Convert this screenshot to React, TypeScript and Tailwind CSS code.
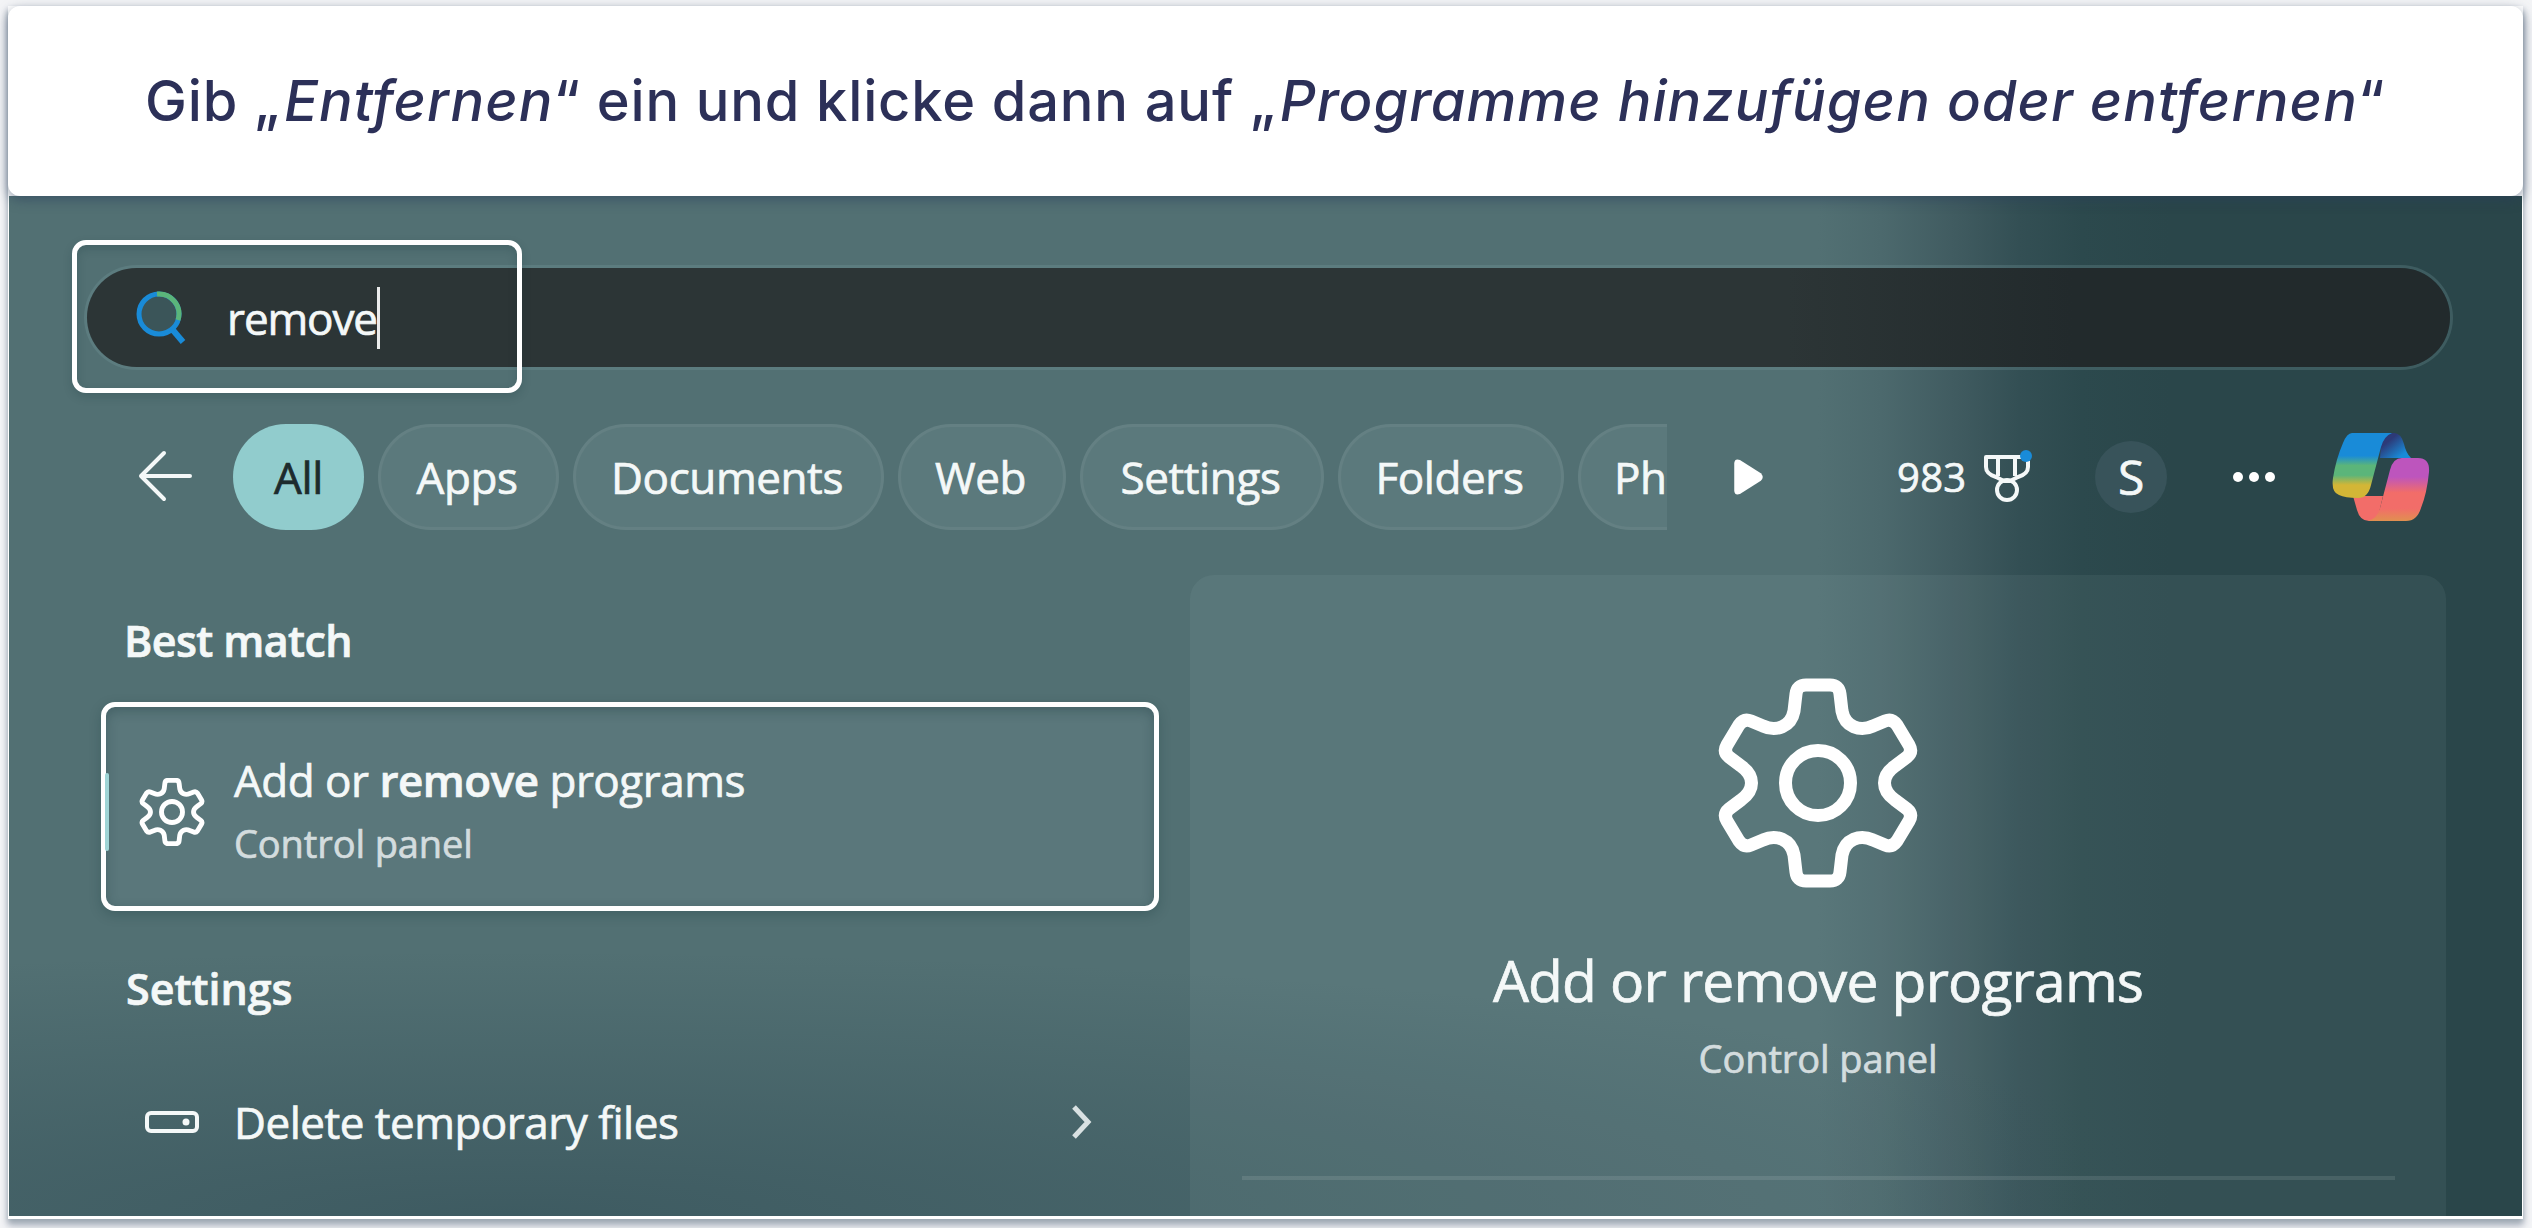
import type { ReactNode } from "react";

const filters = [
  { label: "Apps", className: "w-[181px]" },
  { label: "Documents", className: "w-[311px]" },
  { label: "Web", className: "w-[168px]" },
  { label: "Settings", className: "w-[244px]" },
  { label: "Folders", className: "w-[226px]" },
];

export default function App() {
  return (
    <div className="h-[1228px] w-[2532px] overflow-hidden bg-[#f3f4f6] px-[8px] pt-[6px] font-['Open_Sans','Noto_Sans',sans-serif] text-[#f4f8f8]">
      <div className="flex h-[1213px] w-[2515px] flex-col bg-white shadow-[0_4px_6px_#9aa6b0,0_8px_8px_#c9ccd6]">
        {/* Caption */}
        <header className="relative z-10 flex h-[190px] items-center rounded-[12px] bg-white pb-px pl-[137px] shadow-[0_4px_12px_rgba(40,60,90,0.5)]">
          <h1 className="whitespace-nowrap font-['Inter','Lato',sans-serif] text-[56px] leading-none font-medium tracking-[0.85px] text-[#2c3058]">
            Gib „<em className="ml-[4px] tracking-[1.05px]">Entfernen</em>“ ein und klicke dann auf „<em className="ml-[4px] tracking-[1.05px]">Programme hinzufügen oder entfernen</em>“
          </h1>
        </header>

        <main className="mx-px flex h-[1020px] flex-col overflow-hidden bg-[radial-gradient(ellipse_70%_26%_at_20%_100%,rgba(42,70,80,0.5)_0%,rgba(42,70,80,0.28)_45%,transparent_100%),linear-gradient(to_right,#527073_0%,#527073_72%,#4c696d_74.5%,#405b60_77.5%,#334f54_80%,#2c494d_82.5%,#2a464a_86%)]">
          <SearchBar />
          <Toolbar />
          <div className="mt-[45px] flex">
            <Results />
            <Preview />
          </div>
        </main>
      </div>
    </div>
  );
}

function SearchBar() {
  return (
    <div className="relative ml-[78px] mt-[72px] flex h-[99px] w-[2363px] shrink-0 items-center rounded-full bg-[linear-gradient(to_right,#2c3536_72%,#222a2c_84%)] pl-[49px] shadow-[0_0_0_3px_rgba(125,160,163,0.25)]">
      <SearchIcon />
      <span className="ml-[39px] text-[44px] leading-none tracking-[-1.1px] [-webkit-text-stroke:0.7px]">remove</span>
      <span className="h-[62px] w-[3px] bg-white/90" />
      <div className="absolute -left-[15px] -top-[28px] h-[153px] w-[450px] rounded-[14px] border-[5px] border-white shadow-[0_4px_10px_rgba(20,50,55,0.2),inset_0_4px_10px_rgba(20,50,55,0.2)]" />
    </div>
  );
}

function Toolbar() {
  return (
    <div className="mt-[57px] flex h-[106px] shrink-0 items-center pl-[129px] text-[44px] leading-none tracking-[-0.4px] [-webkit-text-stroke:0.7px]">
      <svg className="h-[54px] w-[54px]" viewBox="0 0 54 54" fill="none" stroke="currentColor" strokeWidth="4" strokeLinecap="round" strokeLinejoin="round">
        <path d="M52 26H3M26 3 3 26l23 23" />
      </svg>
      <div className="ml-[41px] flex w-[1434px] shrink-0 gap-[14px] overflow-hidden">
        <div className="flex h-[106px] w-[131px] shrink-0 items-center justify-center rounded-full bg-[#91cccd] text-[#1d2b2d]">All</div>
        {filters.map((filter) => (
          <Chip key={filter.label} className={filter.className}>{filter.label}</Chip>
        ))}
        <Chip className="w-[200px] justify-start! pl-[33px]">Ph</Chip>
      </div>
      <svg className="ml-[66px] h-[38px] w-[31px]" viewBox="0 0 32 40" fill="white">
        <path d="M7 2 29 16q4 4 0 8L7 38Q1 40 1 34V6Q1 0 7 2z" />
      </svg>
      <span className="ml-[133px] w-[71px] text-[40px] tracking-[0.3px]">983</span>
      <TrophyIcon />
      <div className="ml-[61px] flex h-[72px] w-[72px] items-center justify-center rounded-full bg-[#38535a] text-[48px]">S</div>
      <div className="ml-[66px] flex gap-[6px]">
        <i className="h-[10px] w-[10px] rounded-full bg-white" />
        <i className="h-[10px] w-[10px] rounded-full bg-white" />
        <i className="h-[10px] w-[10px] rounded-full bg-white" />
      </div>
      <CopilotIcon />
    </div>
  );
}

function Chip({ className, children }: { className: string; children: ReactNode }) {
  return (
    <div className={`flex h-[106px] shrink-0 items-center justify-center rounded-full border-[3px] border-white/5 bg-[#b4d2d2]/10 pr-[3px] ${className}`}>
      {children}
    </div>
  );
}

function Results() {
  return (
    <section className="w-[1181px] shrink-0 text-[44px] leading-none tracking-[-0.5px] [-webkit-text-stroke:0.7px]">
      <h2 className="ml-[115px] mt-[44px] text-[43px] font-semibold leading-none tracking-[-0.6px]">Best match</h2>
      <div className="relative ml-[92px] mt-[40px] flex h-[209px] w-[1058px] items-center rounded-[14px] border-[5px] border-white bg-[#5a777b] pl-[33px] shadow-[0_4px_12px_rgba(20,50,55,0.25),inset_0_4px_12px_rgba(20,50,55,0.3)]">
        <div className="absolute -left-px top-[66px] h-[78px] w-[4px] rounded-full bg-[#9fd5d6]" />
        <GearIcon className="mt-[10px] h-[68px] w-[66px]" strokeWidth={15} />
        <div className="ml-[29px] mt-[7px]">
          <p className="whitespace-nowrap">
            Add or <b className="font-semibold">remove</b> programs
          </p>
          <p className="mt-[22px] text-[38px] leading-none tracking-[-0.1px] text-[#d3dcde]">Control panel</p>
        </div>
      </div>
      <h2 className="ml-[117px] mt-[56px] text-[43px] font-semibold leading-none tracking-normal">Settings</h2>
      <div className="ml-[136px] mt-[90px] flex items-center">
        <svg className="h-[22px] w-[54px]" viewBox="0 0 54 22" fill="none" stroke="currentColor" strokeWidth="4">
          <rect x="2" y="2" width="50" height="18" rx="4" />
          <circle cx="41" cy="11" r="3.5" fill="currentColor" stroke="none" />
        </svg>
        <span className="ml-[35px] w-[838px]">Delete temporary files</span>
        <svg className="h-[34px] w-[20px]" viewBox="0 0 20 34" fill="none" stroke="#d9e1e2" strokeWidth="5">
          <path d="m2 2 14 15L2 32" />
        </svg>
      </div>
    </section>
  );
}

function Preview() {
  return (
    <section className="flex h-[660px] w-[1256px] shrink-0 flex-col items-center rounded-t-[24px] bg-[#b4d2d2]/8 leading-none [-webkit-text-stroke:0.7px]">
      <GearIcon className="mt-[103px] h-[210px] w-[204px]" strokeWidth={13} />
      <p className="mt-[64px] text-[57px] leading-none tracking-[-0.85px]">Add or remove programs</p>
      <p className="mt-[30px] text-[38px] leading-none tracking-[-0.1px] text-[#d3dcde]">Control panel</p>
      <div className="mt-[99px] h-[4px] w-[1153px] bg-white/10" />
    </section>
  );
}

function GearIcon({ className, strokeWidth }: { className: string; strokeWidth: number }) {
  return (
    <svg className={className} viewBox="-102 -105 204 210" fill="none" stroke="white" strokeWidth={strokeWidth} strokeLinejoin="round">
      <path d="M-12-98H12Q21-98 22-89L24-72C27-56 42-51 55-57L67-62Q74-65 79-58L91-38Q95-31 89-26L77-17C63-7 63 7 77 17L89 26Q95 31 91 38L79 58Q74 65 67 62L55 57C42 51 27 56 24 72L22 89Q21 98 12 98H-12Q-21 98-22 89L-24 72C-27 56-42 51-55 57L-67 62Q-74 65-79 58L-91 38Q-95 31-89 26L-77 17C-63 7-63-7-77-17L-89-26Q-95-31-91-38L-79-58Q-74-65-67-62L-55-57C-42-51-27-56-24-72L-22-89Q-21-98-12-98Z" />
      <circle r="32.5" />
    </svg>
  );
}

function SearchIcon() {
  return (
    <svg className="h-[54px] w-[52px]" viewBox="0 0 52 54" fill="none" strokeWidth="5">
      <circle cx="23" cy="23" r="20" fill="#3b5559" stroke="#198bd8" />
      <path d="M21 3.1A20 20 0 0 1 42 29" stroke="#5bb57a" />
      <path d="m36 38 11 13" stroke="#198bd8" strokeWidth="6" />
    </svg>
  );
}

function TrophyIcon() {
  return (
    <svg className="ml-[16px] h-[54px] w-[50px]" viewBox="0 0 50 54" fill="none" stroke="currentColor" strokeWidth="4" strokeLinejoin="round">
      <path d="M2 7h42v10q0 7-10 10l-8 4h-6l-8-4Q2 24 2 17ZM14 7v19M31 7v19" />
      <circle cx="23" cy="40" r="10" />
      <circle cx="42" cy="6" r="6" fill="#198bd8" stroke="none" />
    </svg>
  );
}

function CopilotIcon() {
  return (
    <svg className="ml-[57px] h-[90px] w-[98px]" viewBox="0 0 98 90">
      <defs>
        <linearGradient id="copilotLeft" x1="0" y1="0" x2="0" y2="1">
          <stop offset="0.35" stopColor="#198bd8" />
          <stop offset="0.5" stopColor="#5bb57a" />
          <stop offset="0.65" stopColor="#5bb57a" />
          <stop offset="0.8" stopColor="#d3b636" />
        </linearGradient>
        <linearGradient id="copilotRight" x1="0" y1="0" x2="0" y2="1">
          <stop offset="0.3" stopColor="#bd55bd" />
          <stop offset="0.55" stopColor="#f26d69" />
          <stop offset="0.8" stopColor="#f26d69" />
          <stop offset="1" stopColor="#e09050" />
        </linearGradient>
        <linearGradient id="copilotFold" x1="0" y1="0" x2="1" y2="1">
          <stop offset="0.3" stopColor="#2c3a78" />
          <stop offset="0.8" stopColor="#198bd8" />
        </linearGradient>
      </defs>
      <path d="M50 1h12q7 0 10 11 2 9 7 14H48z" fill="url(#copilotFold)" />
      <path d="M21 64h30l-6 25H37q-9 0-12-11z" fill="#f26d69" />
      <path d="M20 1h40q-8 3-11 14L39 53q-3 13-13 13-13 0-19-3Q-1 60 1 46 4 27 11 11 15 1 20 1Z" fill="url(#copilotLeft)" />
      <path d="M70 26h16q12 0 11 14-2 21-8 36-4 13-15 13H36q9-2 12-13l10-38q3-12 12-12Z" fill="url(#copilotRight)" />
    </svg>
  );
}
